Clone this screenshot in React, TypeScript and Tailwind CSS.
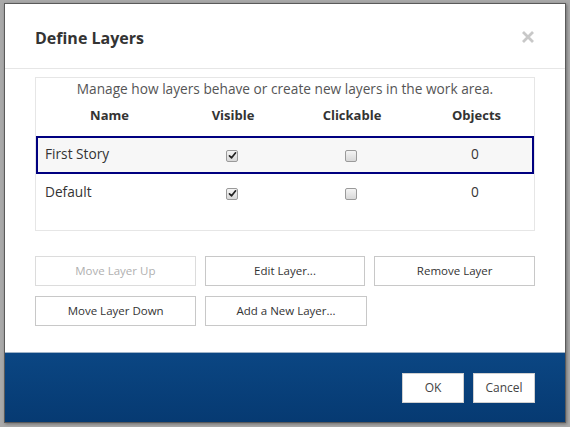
import React from "react";

const font = { fontFamily: '"Open Sans", "Noto Sans", sans-serif' };

function Check({ checked }: { checked: boolean }) {
  return (
    <span className="inline-flex h-[12px] w-[12px] items-center justify-center rounded-[2px] border border-[#9a9a9a] bg-gradient-to-b from-[#f4f4f4] to-[#d8d8d8]">
      {checked && (
        <svg width="9" height="9" viewBox="0 0 9 9">
          <path d="M1.5 4.8 L3.6 6.8 L7.6 1.8" stroke="#222" strokeWidth="1.7" fill="none" strokeLinecap="round" strokeLinejoin="round" />
        </svg>
      )}
    </span>
  );
}

function Btn({ children, disabled }: { children: React.ReactNode; disabled?: boolean }) {
  return (
    <button
      className={
        "h-[30px] flex-1 border bg-white text-[11.5px] " +
        (disabled ? "border-[#dcdcdc] text-[#b0b0b0]" : "border-[#c8c8c8] text-[#333]")
      }
    >
      {children}
    </button>
  );
}

export default function App() {
  const rows = [
    { name: "First Story", visible: true, clickable: false, objects: 0, selected: true },
    { name: "Default", visible: true, clickable: false, objects: 0, selected: false },
  ];
  return (
    <div className="h-[427px] w-[570px] bg-[#a9a9a9] pl-[4px] pt-[3px]" style={font}>
      <div className="flex h-[420px] w-[562px] flex-col border border-[#5a5a5a] bg-white shadow-[1px_1px_3px_rgba(0,0,0,0.35)]">
        <div className="flex h-[65px] items-center justify-between border-b border-[#e6e6e6] pl-[30px] pr-[30px] pt-[4px]">
          <h1 className="text-[16px] font-bold text-[#333]">Define Layers</h1>
          <svg width="14" height="14" viewBox="0 0 14 14" className="mt-[-2px]">
            <path d="M2 2 L12 12 M12 2 L2 12" stroke="#c8c8c8" strokeWidth="2.8" />
          </svg>
        </div>
        <div className="flex-1 px-[30px] pt-[8px]">
          <div className="h-[154px] border border-[#e6e6e6]">
            <p className="pt-[2px] text-center text-[13.7px] leading-[18px] text-[#555]">
              Manage how layers behave or create new layers in the work area.
            </p>
            <div className="mt-[8px] grid grid-cols-[145px_104px_134px_1fr] pb-[10px] text-center text-[13px] font-bold text-[#333]">
              <div className="pl-[2px]">Name</div>
              <div>Visible</div>
              <div>Clickable</div>
              <div>Objects</div>
            </div>
            {rows.map((r) => (
              <div
                key={r.name}
                className={
                  "grid h-[38px] grid-cols-[142px_104px_134px_1fr] items-center text-[13.7px] text-[#333] " +
                  (r.selected ? "border-2 border-[#000080] bg-[#f7f7f7]" : "border-2 border-transparent")
                }
              >
                <div className="pl-[7px]">{r.name}</div>
                <div className="flex justify-center pt-[2px]">
                  <Check checked={r.visible} />
                </div>
                <div className="flex justify-center pt-[2px]">
                  <Check checked={r.clickable} />
                </div>
                <div className="text-center">{r.objects}</div>
              </div>
            ))}
          </div>
          <div className="mt-[25px] flex flex-col gap-[10px]">
            <div className="flex gap-[9px]">
              <Btn disabled>Move Layer Up</Btn>
              <Btn>Edit Layer...</Btn>
              <Btn>Remove Layer</Btn>
            </div>
            <div className="flex gap-[9px]">
              <Btn>Move Layer Down</Btn>
              <Btn>Add a New Layer...</Btn>
              <div className="flex-1" />
            </div>
          </div>
        </div>
        <div className="flex h-[70px] items-center justify-end gap-[9px] border-t border-[#9fb3c8] bg-gradient-to-b from-[#0b4683] to-[#063a72] pr-[30px]">
          <button className="h-[30px] w-[62px] border border-[#d0d0d0] bg-white text-[12px] text-[#444]">OK</button>
          <button className="h-[30px] w-[62px] border border-[#d0d0d0] bg-white text-[12px] text-[#444]">Cancel</button>
        </div>
      </div>
    </div>
  );
}
